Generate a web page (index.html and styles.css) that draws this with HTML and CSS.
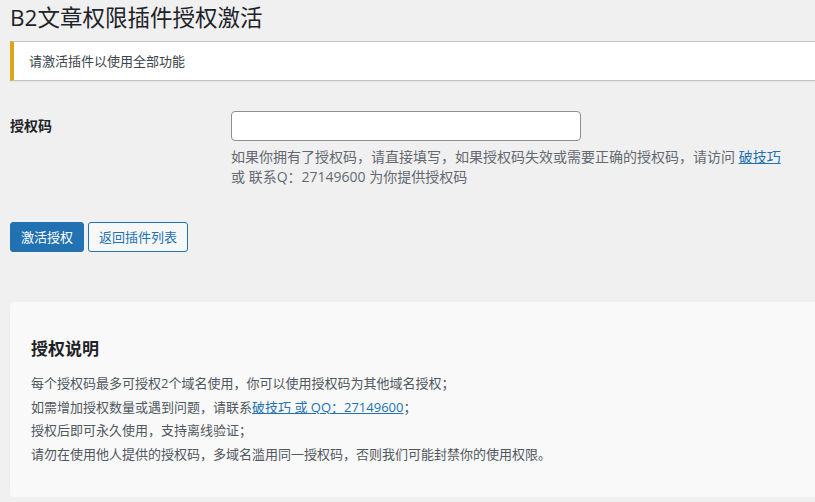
FILE: index.html
```html
<!DOCTYPE html>
<html lang="zh-CN">
<head>
<meta charset="utf-8">
<title>B2文章权限插件授权激活</title>
<link rel="stylesheet" href="styles.css">
</head>
<body>
<div class="wrap">
  <h1 class="page-title">B2文章权限插件授权激活</h1>
  <div class="notice">请激活插件以使用全部功能</div>
  <form class="license-form">
    <div class="form-row">
      <label class="field-label" for="code">授权码</label>
      <div class="field">
        <input id="code" class="text-input" type="text">
        <p class="description">如果你拥有了授权码，请直接填写，如果授权码失效或需要正确的授权码，请访问 <a href="#">破技巧</a><br>或 联系Q：27149600 为你提供授权码</p>
      </div>
    </div>
    <div class="actions">
      <button type="button" class="btn btn-primary">激活授权</button>
      <button type="button" class="btn btn-secondary">返回插件列表</button>
    </div>
  </form>
  <div class="card">
    <h2 class="card-title">授权说明</h2>
    <p class="card-line">每个授权码最多可授权2个域名使用，你可以使用授权码为其他域名授权；</p>
    <p class="card-line">如需增加授权数量或遇到问题，请联系<a href="#">破技巧 或 QQ：27149600</a>；</p>
    <p class="card-line">授权后即可永久使用，支持离线验证；</p>
    <p class="card-line">请勿在使用他人提供的授权码，多域名滥用同一授权码，否则我们可能封禁你的使用权限。</p>
  </div>
</div>
</body>
</html>
```
FILE: styles.css
```css
html, body {
  margin: 0;
  padding: 0;
  background: #f0f0f1;
  overflow: hidden;
}
body {
  font-family: "Open Sans", "Noto Sans CJK SC", sans-serif;
  color: #3c434a;
  font-size: 13px;
}
.wrap {
  padding-left: 10px;
  margin-right: -20px;
}
.page-title {
  margin: 0;
  padding-top: 4px;
  font-size: 22.5px;
  line-height: 27px;
  font-weight: 400;
  color: #1d2327;
}
.notice {
  margin-top: 10px;
  background: #fff;
  border: 1px solid #c3c4c7;
  border-left: 4px solid #dba617;
  padding: 9px 15px;
  line-height: 20px;
  font-size: 13px;
  color: #3c434a;
  box-shadow: 0 1px 1px rgba(0,0,0,0.04);
}
.license-form {
  margin-top: 30px;
}
.form-row {
  display: grid;
  grid-template-columns: 221px 1fr;
}
.field-label {
  font-size: 14px;
  font-weight: 700;
  color: #1d2327;
  line-height: 30px;
}
.text-input {
  display: block;
  box-sizing: border-box;
  width: 350px;
  height: 30px;
  margin: 0;
  border: 1px solid #8c8f94;
  border-radius: 4px;
  background: #fff;
}
.description {
  margin: 6px 0 0;
  font-size: 14px;
  line-height: 20px;
  color: #646970;
}
.description a, .card-line a {
  color: #2271b1;
  text-decoration: underline;
}
.actions {
  display: flex;
  gap: 4px;
  margin-top: 35px;
}
.btn {
  box-sizing: border-box;
  height: 30px;
  padding: 0 10px;
  border-radius: 3px;
  font-family: inherit;
  font-size: 13px;
  line-height: 28px;
  cursor: pointer;
}
.btn-primary {
  background: #2271b1;
  border: 1px solid #2271b1;
  color: #fff;
  padding: 0 10px;
}
.btn-secondary {
  background: #f6f7f7;
  border: 1px solid #2271b1;
  color: #2271b1;
}
.card {
  margin-top: 50px;
  background: #f9f9f9;
  border-radius: 4px;
  padding: 35px 21px 30px;
  box-shadow: 0 1px 2px rgba(0,0,0,0.05);
}
.card-title {
  margin: 0 0 11px;
  font-size: 17px;
  line-height: 24px;
  font-weight: 700;
  color: #1d2327;
}
.card-line {
  margin: 0;
  font-size: 13px;
  line-height: 23.7px;
  color: #50575e;
}
```
